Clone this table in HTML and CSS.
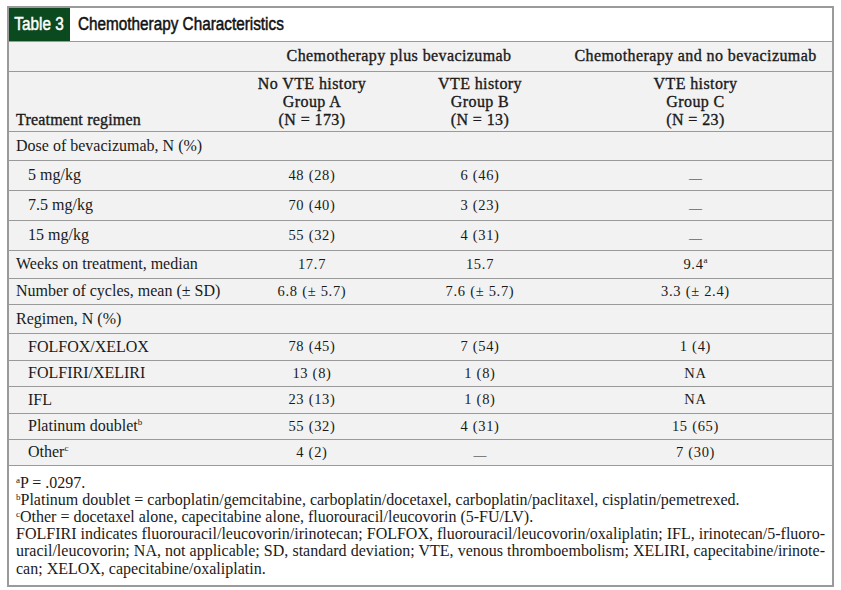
FILE: index.html
```html
<!DOCTYPE html>
<html>
<head>
<meta charset="utf-8">
<link rel="stylesheet" href="styles.css">
</head>
<body>
<div class="frame">
  <div class="title">
    <div class="tag"><span class="narrow">Table 3</span></div>
    <div class="name"><span class="narrow">Chemotherapy Characteristics</span></div>
  </div>
  <table class="tbl">
    <colgroup>
      <col class="c-label"><col class="c-a"><col class="c-b"><col class="c-c">
    </colgroup>
    <thead>
      <tr class="h1">
        <th></th>
        <th colspan="2" class="grp">Chemotherapy plus bevacizumab</th>
        <th class="grp gc">Chemotherapy and no bevacizumab</th>
      </tr>
      <tr class="h2">
        <th class="lab">Treatment regimen</th>
        <th>No VTE history<br>Group A<br>(N = 173)</th>
        <th>VTE history<br>Group B<br>(N = 13)</th>
        <th class="gc">VTE history<br>Group C<br>(N = 23)</th>
      </tr>
    </thead>
    <tbody>
      <tr class="r29"><td class="lab">Dose of bevacizumab, N (%)</td><td></td><td></td><td></td></tr>
      <tr class="r30"><td class="lab ind">5 mg/kg</td><td>48 (28)</td><td>6 (46)</td><td class="gc"><span class="dash">—</span></td></tr>
      <tr class="r30"><td class="lab ind">7.5 mg/kg</td><td>70 (40)</td><td>3 (23)</td><td class="gc"><span class="dash">—</span></td></tr>
      <tr class="r30"><td class="lab ind">15 mg/kg</td><td>55 (32)</td><td>4 (31)</td><td class="gc"><span class="dash">—</span></td></tr>
      <tr class="r28"><td class="lab">Weeks on treatment, median</td><td>17.7</td><td>15.7</td><td class="gc">9.4<sup>a</sup></td></tr>
      <tr class="r26"><td class="lab">Number of cycles, mean (± SD)</td><td>6.8 (± 5.7)</td><td>7.6 (± 5.7)</td><td class="gc">3.3 (± 2.4)</td></tr>
      <tr class="r29"><td class="lab">Regimen, N (%)</td><td></td><td></td><td></td></tr>
      <tr class="r27"><td class="lab ind">FOLFOX/XELOX</td><td>78 (45)</td><td>7 (54)</td><td class="gc">1 (4)</td></tr>
      <tr class="r26"><td class="lab ind">FOLFIRI/XELIRI</td><td>13 (8)</td><td>1 (8)</td><td class="gc">NA</td></tr>
      <tr class="r27"><td class="lab ind">IFL</td><td>23 (13)</td><td>1 (8)</td><td class="gc">NA</td></tr>
      <tr class="r26"><td class="lab ind">Platinum doublet<sup>b</sup></td><td>55 (32)</td><td>4 (31)</td><td class="gc">15 (65)</td></tr>
      <tr class="r26"><td class="lab ind">Other<sup>c</sup></td><td>4 (2)</td><td><span class="dash">—</span></td><td class="gc">7 (30)</td></tr>
    </tbody>
  </table>
  <div class="notes">
    <p class="ln"><sup>a</sup>P = .0297.</p>
    <p class="ln"><sup>b</sup>Platinum doublet = carboplatin/gemcitabine, carboplatin/docetaxel, carboplatin/paclitaxel, cisplatin/pemetrexed.</p>
    <p class="ln"><sup>c</sup>Other = docetaxel alone, capecitabine alone, fluorouracil/leucovorin (5-FU/LV).</p>
    <p class="ln just">FOLFIRI indicates fluorouracil/leucovorin/irinotecan; FOLFOX, fluorouracil/leucovorin/oxaliplatin; IFL, irinotecan/5-fluoro-</p>
    <p class="ln just">uracil/leucovorin; NA, not applicable; SD, standard deviation; VTE, venous thromboembolism; XELIRI, capecitabine/irinote-</p>
    <p class="ln">can; XELOX, capecitabine/oxaliplatin.</p>
  </div>
</div>
</body>
</html>
```

FILE: styles.css
```css
html, body {
  margin: 0;
  padding: 0;
  background: #ffffff;
}

body {
  font-family: "Liberation Serif", "Times New Roman", serif;
  color: #1a1a1a;
}

.frame {
  margin: 6px 0 0 7px;
  width: 823px;
  border: 2px solid #9a9a9a;
  background: #ffffff;
}

.title {
  display: flex;
  align-items: stretch;
  height: 33px;
  border-bottom: 1px solid #9a9a9a;
}

.tag {
  display: flex;
  align-items: center;
  justify-content: center;
  width: 61px;
  background: #0b4a1e;
  color: #ffffff;
}

.name {
  display: flex;
  align-items: center;
  padding-left: 8px;
  color: #111111;
}

.narrow {
  display: inline-block;
  font-family: "Liberation Sans", Arial, sans-serif;
  font-size: 18px;
  transform: scaleX(0.85);
  -webkit-text-stroke: 0.5px currentColor;
}

.tag .narrow {
  transform-origin: center;
}

.name .narrow {
  transform-origin: left center;
}

.tbl {
  width: 823px;
  border-collapse: collapse;
  table-layout: fixed;
  background: #f2f2f2;
}

.c-label { width: 222px; }
.c-a { width: 162px; }
.c-b { width: 174px; }
.c-c { width: 265px; }

.tbl th, .tbl td {
  padding: 0;
  border-bottom: 1px solid #9a9a9a;
  text-align: center;
  vertical-align: middle;
}

.tbl th {
  font-weight: normal;
  font-size: 16px;
  line-height: 18px;
  letter-spacing: 0.4px;
  -webkit-text-stroke: 0.35px #1a1a1a;
  color: #1a1a1a;
}

.h1 { height: 29px; }

.h2 { height: 60px; }
.h2 th {
  vertical-align: bottom;
  padding-bottom: 2px;
}

.tbl th.lab {
  text-align: left;
  padding-left: 7px;
  letter-spacing: 0.2px;
}

.tbl .gc { padding-right: 8px; }

.tbl td {
  font-size: 14.5px;
  letter-spacing: 0.7px;
}

.tbl td.lab {
  text-align: left;
  padding-left: 7px;
  font-size: 16px;
  letter-spacing: 0;
}

.tbl td.ind { padding-left: 19px; }

.r26 { height: 26px; }
.r27 { height: 27px; }
.r28 { height: 28px; }
.r29 { height: 29px; }
.r30 { height: 30px; }

.dash {
  display: inline-block;
  font-size: 13px;
  letter-spacing: 0;
  vertical-align: -4px;
}

sup {
  font-size: 9px;
  line-height: 0;
  vertical-align: 6px;
  letter-spacing: 0;
}

.notes {
  padding: 8px 7px 8px 7px;
  font-size: 16px;
  line-height: 17.2px;
  background: #ffffff;
}

.ln {
  margin: 0;
  white-space: nowrap;
}

.ln.just {
  white-space: normal;
  text-align: justify;
  text-align-last: justify;
}

.notes sup {
  font-size: 9px;
  vertical-align: 5px;
}
```
